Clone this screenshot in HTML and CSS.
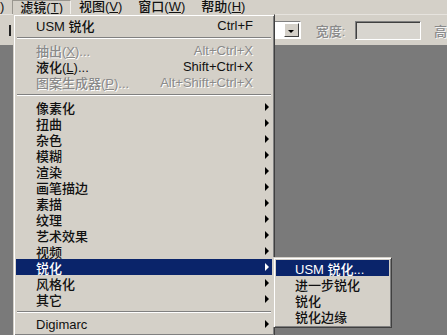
FILE: index.html
```html
<!DOCTYPE html>
<html lang="zh-CN">
<head>
<meta charset="UTF-8" />
<title>滤镜 菜单</title>
<link rel="stylesheet" href="styles.css">
</head>
<body>

<div id="app">

  <!-- Hlavní lišta menu -->
  <div class="menubar">
    <span class="menubar-item first">)</span>
    <span class="menubar-item pressed">滤镜(<u>T</u>)</span>
    <span class="menubar-item">视图(<u>V</u>)</span>
    <span class="menubar-item">窗口(<u>W</u>)</span>
    <span class="menubar-item">帮助(<u>H</u>)</span>
  </div>

  <!-- Lišta voleb nástroje -->
  <div class="optionsbar">
    <span class="tool-glyph"></span>
    <div class="select">
      <span class="select-button"><span class="down-arrow"></span></span>
    </div>
    <span class="opt-label">宽度:</span>
    <span class="opt-input"></span>
    <span class="opt-label cut">高</span>
  </div>

  <div class="workspace"></div>

  <!-- Rozbalené menu Filtr -->
  <div class="menu main-menu">
    <div class="menu-row"><span class="label">USM 锐化</span><span class="shortcut">Ctrl+F</span><span class="sub"></span></div>
    <div class="menu-sep"></div>
    <div class="menu-row disabled"><span class="label">抽出(<u>X</u>)...</span><span class="shortcut">Alt+Ctrl+X</span><span class="sub"></span></div>
    <div class="menu-row"><span class="label">液化(<u>L</u>)...</span><span class="shortcut">Shift+Ctrl+X</span><span class="sub"></span></div>
    <div class="menu-row disabled"><span class="label">图案生成器(<u>P</u>)...</span><span class="shortcut">Alt+Shift+Ctrl+X</span><span class="sub"></span></div>
    <div class="menu-sep"></div>
    <div class="menu-row"><span class="label">像素化</span><span class="sub"><i class="tri"></i></span></div>
    <div class="menu-row"><span class="label">扭曲</span><span class="sub"><i class="tri"></i></span></div>
    <div class="menu-row"><span class="label">杂色</span><span class="sub"><i class="tri"></i></span></div>
    <div class="menu-row"><span class="label">模糊</span><span class="sub"><i class="tri"></i></span></div>
    <div class="menu-row"><span class="label">渲染</span><span class="sub"><i class="tri"></i></span></div>
    <div class="menu-row"><span class="label">画笔描边</span><span class="sub"><i class="tri"></i></span></div>
    <div class="menu-row"><span class="label">素描</span><span class="sub"><i class="tri"></i></span></div>
    <div class="menu-row"><span class="label">纹理</span><span class="sub"><i class="tri"></i></span></div>
    <div class="menu-row"><span class="label">艺术效果</span><span class="sub"><i class="tri"></i></span></div>
    <div class="menu-row"><span class="label">视频</span><span class="sub"><i class="tri"></i></span></div>
    <div class="menu-row active"><span class="label">锐化</span><span class="sub"><i class="tri"></i></span></div>
    <div class="menu-row"><span class="label">风格化</span><span class="sub"><i class="tri"></i></span></div>
    <div class="menu-row"><span class="label">其它</span><span class="sub"><i class="tri"></i></span></div>
    <div class="menu-sep"></div>
    <div class="menu-row"><span class="label">Digimarc</span><span class="sub"><i class="tri"></i></span></div>
  </div>

  <!-- Podmenu Zostření -->
  <div class="menu sub-menu">
    <div class="menu-row active"><span class="label">USM 锐化...</span></div>
    <div class="menu-row"><span class="label">进一步锐化</span></div>
    <div class="menu-row"><span class="label">锐化</span></div>
    <div class="menu-row"><span class="label">锐化边缘</span></div>
  </div>

</div>

</body>
</html>
```

FILE: styles.css
```css
body {
  margin: 0;
  padding: 0;
  background: #7a7a7a;
  font-family: "Liberation Sans", "Noto Sans CJK SC", sans-serif;
  font-size: 13px;
  font-weight: 500;
  color: #111;
}
#app {
  position: relative;
  width: 447px;
  height: 335px;
  overflow: hidden;
  display: flex;
  flex-direction: column;
}
u {
  text-decoration: underline;
  text-underline-offset: 1px;
}

/* Menu lišta */
.menubar {
  height: 14px;
  display: flex;
  align-items: center;
  background: #d4d0c8;
  line-height: 14px;
}
.menubar-item {
  padding: 0 8px;
  height: 14px;
  white-space: nowrap;
}
.menubar-item.first {
  padding: 0 8px 0 0;
}
.menubar-item.pressed {
  box-sizing: border-box;
  border-left: 1px solid #9a9790;
  border-top: 1px solid #9a9790;
  border-right: 1px solid #f2f0ec;
  padding: 0 7px;
  line-height: 13px;
}

/* Lišta voleb */
.optionsbar {
  height: 31px;
  display: flex;
  align-items: center;
  background: #d4d0c8;
  border-top: 1px solid #e6e3de;
  box-sizing: border-box;
}
.tool-glyph {
  width: 2px;
  height: 11px;
  margin-left: 9px;
  background: #222;
}
.select {
  width: 114px;
  height: 18px;
  margin-left: 178px;
  box-sizing: border-box;
  background: #fff;
  border-top: 1px solid #808080;
  border-left: 1px solid #808080;
  border-right: 1px solid #fff;
  border-bottom: 1px solid #fff;
  display: flex;
  justify-content: flex-end;
  align-items: center;
  padding-right: 1px;
}
.select-button {
  width: 15px;
  height: 14px;
  box-sizing: border-box;
  background: #d4d0c8;
  border-top: 1px solid #fff;
  border-left: 1px solid #fff;
  border-right: 1px solid #404040;
  border-bottom: 1px solid #404040;
  display: flex;
  align-items: center;
  justify-content: center;
}
.down-arrow {
  width: 0;
  height: 0;
  border-left: 3px solid transparent;
  border-right: 3px solid transparent;
  border-top: 3px solid #000;
  margin-top: 2px;
}
.opt-label {
  margin-left: 15px;
  color: #8a8a8a;
  text-shadow: 1px 1px 0 #f4f4f4;
  white-space: nowrap;
}
.opt-input {
  width: 67px;
  height: 19px;
  margin-left: 10px;
  box-sizing: border-box;
  background: #d8d5cf;
  border-top: 1px solid #808080;
  border-left: 1px solid #808080;
  border-right: 1px solid #fff;
  border-bottom: 1px solid #fff;
  box-shadow: inset 1px 1px 0 #404040;
}
.opt-label.cut {
  margin-left: 13px;
}

.workspace {
  flex: 1;
  background: #7a7a7a;
}

/* Rozbalovací menu */
.menu {
  position: absolute;
  box-sizing: border-box;
  background: #d4d0c8;
  border-top: 1px solid #d4d0c8;
  border-left: 1px solid #d4d0c8;
  border-right: 1px solid #404040;
  border-bottom: 1px solid #404040;
  box-shadow: inset 1px 1px 0 #fff, inset -1px -1px 0 #808080;
  padding: 2px;
  display: flex;
  flex-direction: column;
}
.main-menu {
  left: 13px;
  top: 14px;
  width: 262px;
  height: 322px;
}
.sub-menu {
  left: 273px;
  top: 257px;
  width: 119px;
  padding-bottom: 3px;
  z-index: 2;
}
.menu-row {
  height: 16px;
  display: flex;
  align-items: center;
  padding-left: 20px;
  white-space: nowrap;
}
.sub-menu .menu-row {
  padding-left: 19px;
}
.menu-row .label {
  flex: 1;
}
.menu-row .shortcut {
  text-align: right;
}
.menu-row .sub {
  width: 19px;
  height: 16px;
  display: flex;
  align-items: center;
  padding-left: 12px;
  box-sizing: border-box;
}
.tri {
  width: 0;
  height: 0;
  border-top: 4px solid transparent;
  border-bottom: 4px solid transparent;
  border-left: 4px solid #000;
}
.menu-row.active {
  background: #0a246a;
  color: #fff;
}
.menu-row.active .tri {
  border-left-color: #fff;
}
.menu-row.disabled {
  color: #8a8a8a;
  text-shadow: 1px 1px 0 #fff;
}
.menu-sep {
  height: 9px;
  display: flex;
  flex-direction: column;
  justify-content: center;
}
.menu-sep::before {
  content: "";
  height: 1px;
  background: #808080;
  border-bottom: 1px solid #fff;
  margin: 0 1px;
}
```
